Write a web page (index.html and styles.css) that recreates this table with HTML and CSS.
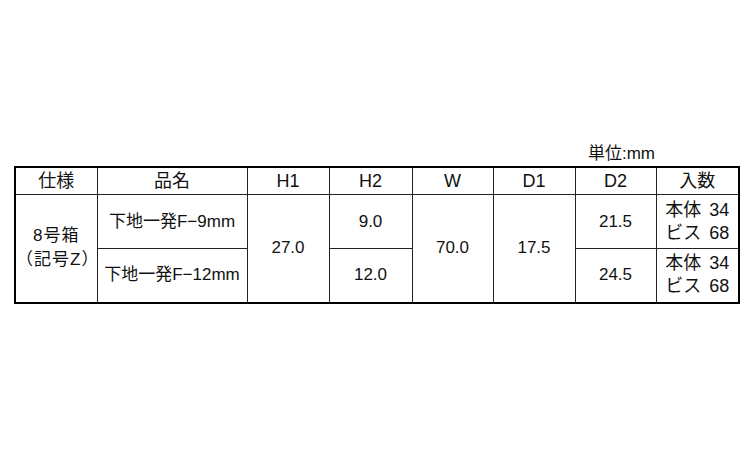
FILE: index.html
```html
<!DOCTYPE html>
<html lang="ja">
<head>
<meta charset="utf-8">
<link rel="stylesheet" href="styles.css">
</head>
<body>
<div class="page">
  <div class="unit">単位:mm</div>
  <table class="spec">
    <colgroup>
      <col class="c1"><col class="c2"><col class="c3"><col class="c4"><col class="c5"><col class="c6"><col class="c7"><col class="c8">
    </colgroup>
    <thead>
      <tr>
        <th>仕様</th><th>品名</th><th>H1</th><th>H2</th><th>W</th><th>D1</th><th>D2</th><th>入数</th>
      </tr>
    </thead>
    <tbody>
      <tr>
        <td rowspan="2" class="kind">8号箱<br>（記号Z）</td>
        <td>下地一発F−9mm</td>
        <td rowspan="2">27.0</td>
        <td>9.0</td>
        <td rowspan="2">70.0</td>
        <td rowspan="2">17.5</td>
        <td>21.5</td>
        <td class="qty">本体 34<br>ビス 68</td>
      </tr>
      <tr>
        <td>下地一発F−12mm</td>
        <td>12.0</td>
        <td>24.5</td>
        <td class="qty">本体 34<br>ビス 68</td>
      </tr>
    </tbody>
  </table>
</div>
</body>
</html>
```

FILE: styles.css
```css
html, body {
  margin: 0;
  padding: 0;
  background: #ffffff;
}

body {
  font-family: "Liberation Sans", "Noto Sans CJK JP", sans-serif;
  color: #111111;
}

.page {
  padding: 143px 0 0 14px;
  width: 724px;
}

.unit {
  text-align: right;
  padding-right: 83px;
  font-size: 17px;
  line-height: 22px;
  height: 23px;
}

.spec {
  border-collapse: collapse;
  table-layout: fixed;
  width: 724px;
  border: 2px solid #000;
}

.c1 { width: 82px; }
.c2 { width: 150px; }
.c3 { width: 82px; }
.c4 { width: 83px; }
.c5 { width: 81px; }
.c6 { width: 82px; }
.c7 { width: 81px; }
.c8 { width: 83px; }

.spec th,
.spec td {
  border: 1px solid #222;
  padding: 0;
  text-align: center;
  vertical-align: middle;
  font-weight: normal;
  font-size: 17px;
  line-height: 20px;
}

.spec th {
  height: 26px;
  font-size: 18px;
}

.spec tbody tr {
  height: 54px;
}

.spec td.kind {
  line-height: 24px;
  letter-spacing: 1px;
}

.spec td.qty {
  font-size: 18px;
  line-height: 23px;
  word-spacing: 3px;
}
```
